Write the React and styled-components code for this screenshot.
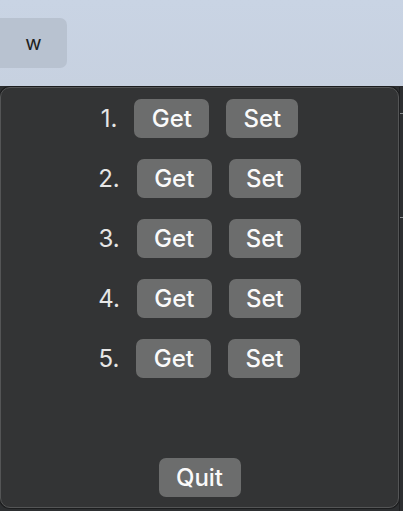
import styled, { createGlobalStyle } from "styled-components";

const GlobalStyle = createGlobalStyle`
  html, body {
    margin: 0;
    padding: 0;
    background: #2d2f31;
  }
  body {
    font-family: Inter, "Liberation Sans", sans-serif;
  }
`;

const slots = [1, 2, 3, 4, 5];

export default function App() {
  return (
    <>
      <GlobalStyle />
      <Screen>
        <TopBar>
          <KeyButton>w</KeyButton>
        </TopBar>
        <Body>
          <Panel>
            <SlotList>
              {slots.map(n => (
                <SlotRow key={n}>
                  <SlotNum>{n}.</SlotNum>
                  <ActionButton $w={75}>Get</ActionButton>
                  <ActionButton $w={72}>Set</ActionButton>
                </SlotRow>
              ))}
            </SlotList>
            <ActionButton $w={82}>Quit</ActionButton>
          </Panel>
          <SideStrip>
            <StripLine />
            <StripLine />
          </SideStrip>
        </Body>
      </Screen>
    </>
  );
}

const Screen = styled.div`
  width: 403px;
  height: 511px;
  display: flex;
  flex-direction: column;
  overflow: hidden;
`;

const TopBar = styled.div`
  height: 87px;
  flex-shrink: 0;
  box-sizing: border-box;
  padding-top: 18px;
  background: linear-gradient(180deg, #c9d4e4 0%, #c7d1e0 100%);
  border-bottom: 1px solid #2a2b2d;
`;

const KeyButton = styled.div`
  width: 67px;
  height: 50px;
  border-radius: 0 7px 7px 0;
  background: #b8c2d0;
  color: #1e1f21;
  font-size: 20px;
  display: flex;
  align-items: center;
  justify-content: center;
  font-family: Inter, "Liberation Sans", sans-serif;
`;

const Body = styled.div`
  flex: 1;
  display: flex;
  background: #2d2f31;
`;

const Panel = styled.div`
  width: 399px;
  height: 421px;
  box-sizing: border-box;
  padding: 11px 0 10px;
  background: #333435;
  border: 1px solid #545556;
  border-radius: 10px;
  box-shadow: 0 0 0 1px #1c1d1e;
  display: flex;
  flex-direction: column;
  align-items: center;
  justify-content: space-between;
`;

const SlotList = styled.div`
  display: flex;
  flex-direction: column;
  align-items: center;
  gap: 21px;
`;

const SlotRow = styled.div`
  display: flex;
  align-items: center;
  gap: 17px;
`;

const SlotNum = styled.span`
  color: #e6e6e6;
  font-size: 24px;
  font-weight: 400;
`;

const ActionButton = styled.button`
  width: ${p => p.$w}px;
  height: 39px;
  padding: 0;
  border: none;
  border-radius: 7px;
  background: #6c6d6d;
  color: #fafafa;
  font-family: Inter, "Liberation Sans", sans-serif;
  font-size: 24px;
  font-weight: 500;
  cursor: pointer;
`;

const SideStrip = styled.div`
  flex: 1;
  display: flex;
  flex-direction: column;
  gap: 103px;
  padding-top: 26px;
  border-left: 1px solid #1f2022;
`;

const StripLine = styled.div`
  height: 1px;
  background: #8a8c8e;
`;
